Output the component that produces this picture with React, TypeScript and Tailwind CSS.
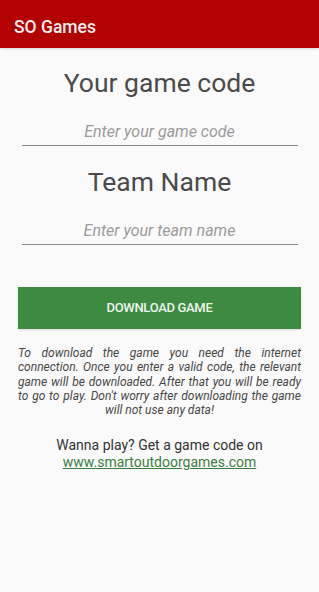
import React, { useState } from 'react';

export default function App() {
  const [code, setCode] = useState('');
  const [team, setTeam] = useState('');

  return (
    <div className="w-[319px] h-[592px] bg-[#fafafa] flex flex-col" style={{ fontFamily: 'Roboto, "Liberation Sans", sans-serif' }}>
      <header className="h-12 bg-[#b30000] flex items-center pt-[7px] px-[14px] shadow-sm">
        <h1 className="text-[17.5px] font-medium text-[#fdf0f0]">SO Games</h1>
      </header>

      <main className="flex flex-col items-center pt-[16px]">
        <h2 className="text-[26.5px] leading-[38px] text-[#4a4a4a]">Your game code</h2>
        <input
          value={code}
          onChange={(e) => setCode(e.target.value)}
          placeholder="Enter your game code"
          className="mt-[15px] w-[276px] h-[29px] bg-transparent text-center text-[16px] italic text-[#444] placeholder:text-[#9a9a9a] border-b border-[#8a8a8a] outline-none"
        />

        <h2 className="mt-[17px] text-[26.5px] leading-[38px] text-[#4a4a4a]">Team Name</h2>
        <input
          value={team}
          onChange={(e) => setTeam(e.target.value)}
          placeholder="Enter your team name"
          className="mt-[15px] w-[276px] h-[29px] bg-transparent text-center text-[16px] italic text-[#444] placeholder:text-[#9a9a9a] border-b border-[#8a8a8a] outline-none"
        />

        <button className="mt-[42px] w-[283px] h-[42px] bg-[#3d8b40] text-[#eef6ee] text-[13px] font-medium tracking-tight shadow-sm">
          DOWNLOAD GAME
        </button>

        <p className="mt-[17px] w-[283px] text-[12px] leading-[14.3px] italic text-[#474747] text-justify [text-align-last:center]">
          To download the game you need the internet connection. Once you enter a valid code, the relevant game will be downloaded. After that you will be ready to go to play. Don't worry after downloading the game will not use any data!
        </p>

        <div className="mt-[20px] text-center text-[14px] leading-[17px] text-[#333]">
          <div>Wanna play? Get a game code on</div>
          <a href="#" className="text-[#3d7d40] underline">www.smartoutdoorgames.com</a>
        </div>
      </main>
    </div>
  );
}
